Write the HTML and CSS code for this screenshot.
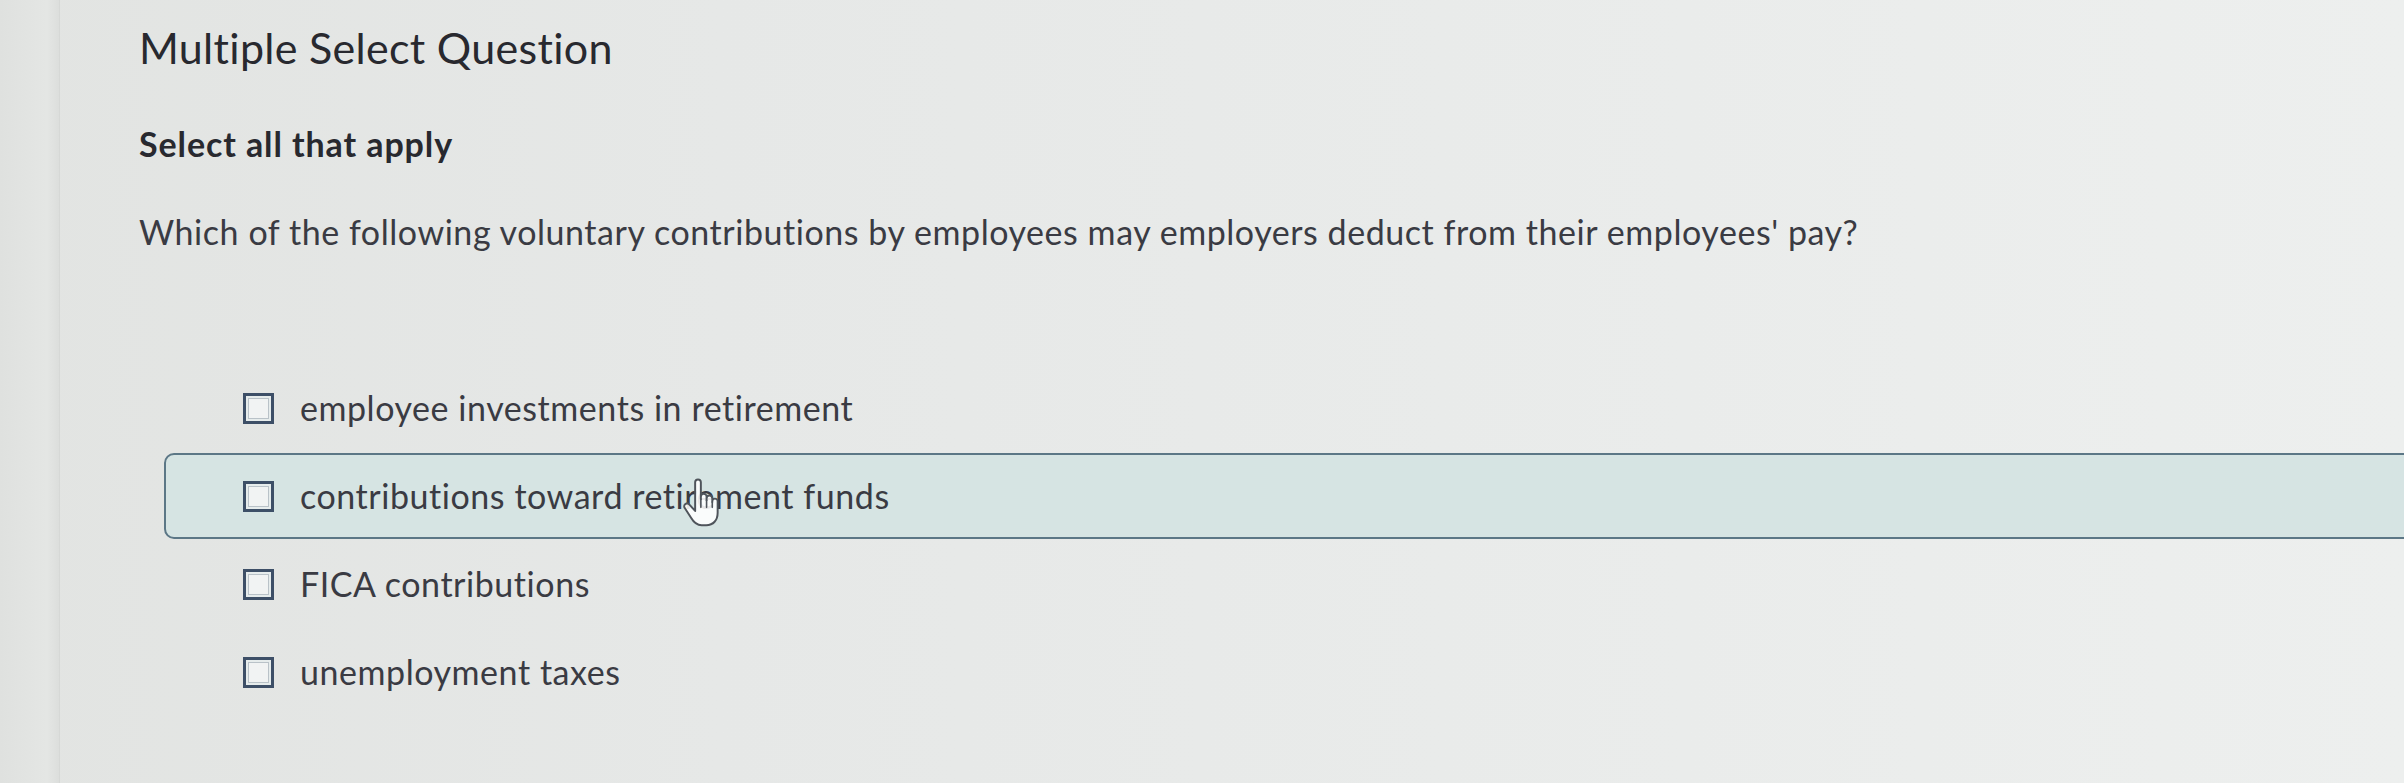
FILE: index.html
```html
<!DOCTYPE html>
<html lang="en">
<head>
<meta charset="utf-8">
<title>Multiple Select Question</title>
<link rel="stylesheet" href="styles.css">
</head>
<body>
<div class="screen">
  <aside class="rail"></aside>
  <main class="content">
    <h1 class="title">Multiple Select Question</h1>
    <p class="instruction">Select all that apply</p>
    <p class="prompt">Which of the following voluntary contributions by employees may employers deduct from their employees' pay?</p>
    <ul class="options">
      <li class="option"><span class="box"></span><span class="label">employee investments in retirement</span></li>
      <li class="option option-hover"><span class="box"></span><span class="label">contributions toward retirement funds</span>
        <svg class="cursor" viewBox="0 0 20 28" width="37" height="50" aria-hidden="true">
          <path d="M7 3 a1.6 1.6 0 0 1 3.2 0 V12.5 V11 a1.6 1.6 0 0 1 3.2 0 V13 V12 a1.6 1.6 0 0 1 3.2 0 V14 V13.6 a1.5 1.5 0 0 1 3 0 V20 c0 4.2 -2.4 7 -6.4 7 H10.6 c-3 0 -4.4 -1.6 -5.8 -4 L1.2 17.4 a1.6 1.6 0 0 1 2.6 -1.9 L7 19 Z" fill="rgba(255,255,255,0.88)" stroke="#4f545b" stroke-width="1.1" stroke-linejoin="round"/>
          <path d="M10.2 12.5 V17 M13.4 13 V17 M16.6 14 V17" fill="none" stroke="#4f545b" stroke-width="0.9" stroke-linecap="round"/>
        </svg>
      </li>
      <li class="option"><span class="box"></span><span class="label">FICA contributions</span></li>
      <li class="option"><span class="box"></span><span class="label">unemployment taxes</span></li>
    </ul>
  </main>
</div>
</body>
</html>
```

FILE: styles.css
```css
* { box-sizing: border-box; }

html, body {
  margin: 0;
  padding: 0;
  width: 2404px;
  height: 783px;
  overflow: hidden;
}

body {
  font-family: Lato, "Open Sans", Arial, sans-serif;
  color: #33343c;
  background: #e6e8e6;
}

.screen {
  display: flex;
  width: 2404px;
  height: 783px;
  background: linear-gradient(90deg, #e2e4e2 0%, #e6e8e7 30%, #eaeceb 70%, #edefee 100%);
}

.rail {
  flex: 0 0 60px;
  background: linear-gradient(90deg, #dfe1df 0%, #e4e6e4 80%, #dcdedc 100%);
  border-right: 1px solid #d6d8d6;
}

.content {
  flex: 1;
  padding: 22px 0 0 79px;
  min-width: 0;
}

.title {
  margin: 0;
  font-size: 43px;
  line-height: 52px;
  font-weight: 400;
  color: #28292f;
  letter-spacing: 0.3px;
}

.instruction {
  margin: 50px 0 0;
  font-size: 34px;
  line-height: 40px;
  font-weight: 700;
  color: #28292f;
  letter-spacing: 0.9px;
}

.prompt {
  margin: 48px 0 0;
  font-size: 34px;
  line-height: 40px;
  font-weight: 400;
  color: #3a3b43;
  letter-spacing: 0.55px;
}

.options {
  list-style: none;
  margin: 113px -40px 0 25px;
  padding: 0;
  display: flex;
  flex-direction: column;
  gap: 2px;
}

.option {
  position: relative;
  display: flex;
  align-items: center;
  gap: 26px;
  height: 86px;
  padding-left: 77px;
  border: 2px solid transparent;
  border-radius: 10px;
}

.option-hover {
  background: #d6e4e3;
  border-color: #5c7786;
}

.box {
  flex: 0 0 31px;
  width: 31px;
  height: 31px;
  border: 3.5px solid #3d4f67;
  background: #f1f3f3;
  box-shadow: inset 0 0 0 2px #e6ecec, inset 0 0 0 3px #b9c2c8;
}

.label {
  font-size: 34px;
  line-height: 40px;
  color: #3a3b43;
  letter-spacing: 0.55px;
}

.cursor {
  position: absolute;
  left: 516px;
  top: 22px;
}
```
